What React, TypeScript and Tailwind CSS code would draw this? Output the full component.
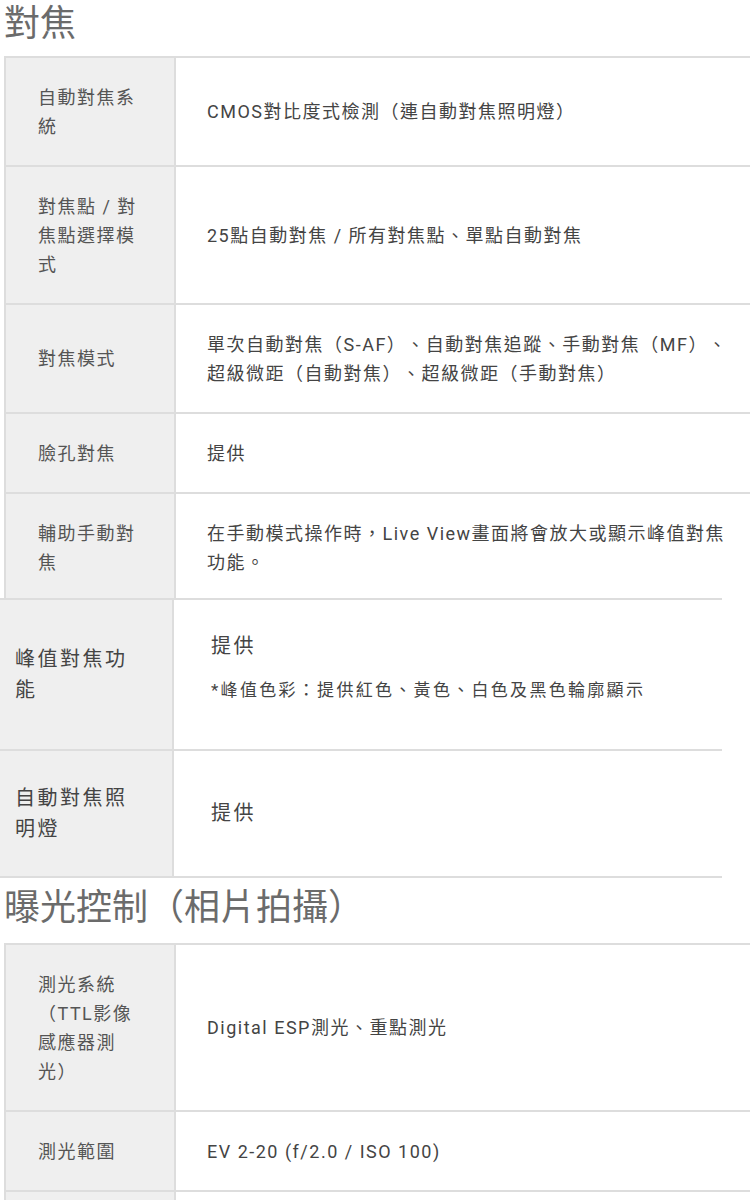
import type { ReactNode } from "react"

type Row = { label: string; value: ReactNode; pad?: string }

const focusRows: Row[] = [
    { label: "自動對焦系統", value: "CMOS對比度式檢測（連自動對焦照明燈）" },
    { label: "對焦點 / 對焦點選擇模式", value: "25點自動對焦 / 所有對焦點、單點自動對焦" },
    {
        label: "對焦模式",
        value: "單次自動對焦（S-AF）、自動對焦追蹤、手動對焦（MF）、超級微距（自動對焦）、超級微距（手動對焦）",
    },
    { label: "臉孔對焦", value: "提供" },
    {
        label: "輔助手動對焦",
        value: "在手動模式操作時，Live View畫面將會放大或顯示峰值對焦功能。",
        pad: "pt-[24.5px] pb-[21.5px]",
    },
]

const exposureRows: Row[] = [
    { label: "測光系統（TTL影像感應器測光）", value: "Digital ESP測光、重點測光" },
    { label: "測光範圍", value: "EV 2-20 (f/2.0 / ISO 100)" },
    // next row only peeks in at the bottom edge
    { label: "\u00a0", value: "\u00a0" },
]

function SpecTable ({ rows, className }: { rows: Row[]; className?: string }) {
    return (
        <div className={ `ml-[4px] w-[746px] border-l-2 border-t-2 border-[#dddddd] ${className ?? ""}` }>
            { rows.map((row, idx) => {
                const pad = row.pad ?? "py-[24.5px]"
                const last = idx === rows.length - 1
                return (
                    <div key={ idx } className={ last ? "flex" : "flex border-b-2 border-[#dddddd]" }>
                        <div className={ `w-[170px] shrink-0 flex items-center bg-[#efefef] border-r-2 border-[#dddddd] pl-[32px] pr-[26px] text-[#555555] ${pad}` }>
                            { row.label }
                        </div>
                        <div className={ `flex-1 flex items-center pl-[31px] text-[#444444] ${pad}` }>
                            <div className="w-[533px]">{ row.value }</div>
                        </div>
                    </div>
                )
            }) }
        </div>
    )
}

export default function App () {
    return (
        <div className="w-[750px] h-[1200px] overflow-hidden bg-white [text-spacing-trim:space-all] font-['Roboto','Noto_Sans_CJK_TC',sans-serif]">
            {/* 對焦 */ }
            <h2 className="pt-[2px] pl-[4px] text-[36px] leading-[36px] text-[#6b6b6b] font-['Noto_Sans_CJK_TC',sans-serif]">
                對焦
            </h2>

            <SpecTable rows={ focusRows } className="mt-[18px] text-[18px] leading-[29px] tracking-[1.5px]" />

            {/* peaking rows, larger scale */ }
            <div className="w-[722px] border-t-2 border-[#dddddd] text-[20px] leading-[31px] tracking-[2.5px] text-[#444444]">
                <div className="flex h-[151px] border-b-2 border-[#dddddd]">
                    <div className="w-[174px] shrink-0 flex items-center bg-[#efefef] border-r-2 border-[#dddddd] pl-[15px] pr-[37px]">
                        峰值對焦功能
                    </div>
                    <div className="flex-1 pl-[37px] pt-[31px]">
                        <p>提供</p>
                        <p className="mt-[13px] text-[17px] leading-[30px] tracking-[2.3px]">
                            *峰值色彩：提供紅色、黃色、白色及黑色輪廓顯示
                        </p>
                    </div>
                </div>
                <div className="flex h-[127px] border-b-2 border-[#dddddd]">
                    <div className="w-[174px] shrink-0 flex items-center bg-[#efefef] border-r-2 border-[#dddddd] pl-[15px] pr-[37px]">
                        自動對焦照明燈
                    </div>
                    <div className="flex-1 flex items-center pl-[37px]">
                        提供
                    </div>
                </div>
            </div>

            {/* 曝光控制 */ }
            <h2 className="mt-[8px] pl-[4px] text-[36px] leading-[36px] text-[#6b6b6b] font-['Noto_Sans_CJK_TC',sans-serif]">
                曝光控制（相片拍攝）
            </h2>

            <SpecTable rows={ exposureRows } className="mt-[21px] text-[18px] leading-[29px] tracking-[1.5px]" />
        </div>
    )
}
